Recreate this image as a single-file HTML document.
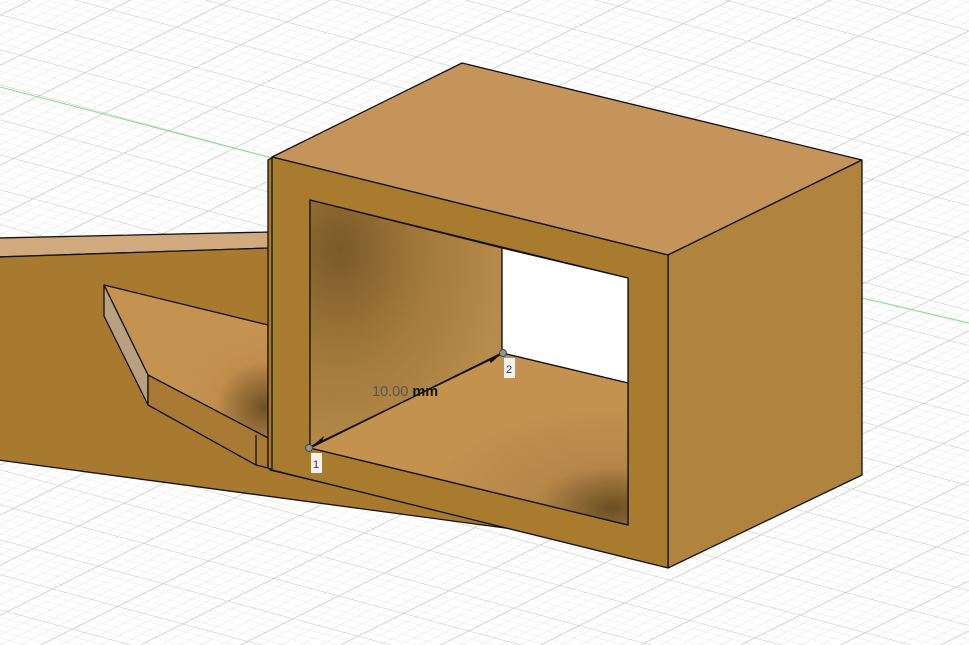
<!DOCTYPE html>
<html><head><style>
html,body{margin:0;padding:0;width:969px;height:645px;overflow:hidden;background:#fff}
svg{display:block}
text{font-family:"Liberation Sans",sans-serif}
</style></head><body>
<svg width="969" height="645" viewBox="0 0 969 645">
<defs>
<pattern id="g" width="50" height="50" patternUnits="userSpaceOnUse" patternTransform="matrix(1.3 0.35 0.91 -0.455 0 15)">
<path d="M10 0V50M20 0V50M30 0V50M40 0V50M0 10H50M0 20H50M0 30H50M0 40H50" stroke="#ebebeb" stroke-width="0.8" fill="none"/>
<path d="M0 0H50M0 0V50" stroke="#b8b8b8" stroke-width="1.3" fill="none"/>
</pattern>
<radialGradient id="bw" cx="0.15" cy="0.2" r="0.9">
<stop offset="0" stop-color="#7a5a28"/><stop offset="0.5" stop-color="#a37a3c"/><stop offset="1" stop-color="#b88c4c"/>
</radialGradient>
<radialGradient id="fl" cx="0.95" cy="0.9" r="0.6">
<stop offset="0" stop-color="#6a4e22"/><stop offset="0.4" stop-color="#b48648"/><stop offset="1" stop-color="#c4924f"/>
</radialGradient>
<radialGradient id="wt" cx="0.98" cy="0.8" r="0.5">
<stop offset="0" stop-color="#6f5023"/><stop offset="0.6" stop-color="#c08d4d"/><stop offset="1" stop-color="#c49352"/>
</radialGradient>
</defs>
<rect width="969" height="645" fill="url(#g)"/>
<line x1="0" y1="87" x2="272" y2="158" stroke="#7de07d" stroke-width="1"/>
<line x1="862" y1="298" x2="969" y2="323" stroke="#7de07d" stroke-width="1"/>
<g stroke="#111" stroke-width="1.3" stroke-linejoin="round">
<polygon points="-2,238 270,232 270,248 -2,257" fill="#d0a97c"/>
<polygon points="-2,257 270,248 270,470 520,530 -2,460" fill="#a87a2f"/>
<polygon points="104,285 268,325 268,438 148,375" fill="url(#wt)"/>
<polygon points="104,285 148,375 148,405 104,316" fill="#b9a07f"/>
<polygon points="148,375 268,438 268,468 256,465 148,405" fill="#a87a33"/>
<line x1="256" y1="435" x2="256" y2="465"/>
<polygon points="268,160 273,157 273,470 268,468" fill="#a77b33"/>
<polygon points="272,157 462,63 862,160 668,255" fill="#c4945a"/>
<polygon points="668,255 862,160 862,475 668,568" fill="#b0843f"/>
<path d="M272,157 L668,255 L668,568 L272,470 Z M310,200 L310,448 L628,525 L628,278 Z" fill="#a97b2e" fill-rule="evenodd"/>
<polygon points="310,200 502,248 502,353 310,448" fill="url(#bw)"/>
<polygon points="502,248 628,278 628,383 502,353" fill="#fff"/>
<polygon points="310,448 502,353 628,383 628,525" fill="url(#fl)"/>
</g>
<line x1="312" y1="446" x2="500" y2="355" stroke="#111" stroke-width="1.3"/>
<polygon points="312,446 324,436 322,442" fill="#111"/>
<polygon points="500,355 488,359 491,363" fill="#111"/>
<text x="372" y="396" font-size="14.5" fill="#555">10.00 <tspan fill="#111" font-weight="bold">mm</tspan></text>
<circle cx="309" cy="448" r="3.5" fill="#8a9a9a" stroke="#444"/>
<circle cx="503" cy="353" r="3.5" fill="#8a9a9a" stroke="#444"/>
<rect x="311" y="453" width="11" height="20" fill="#f2f2f2"/>
<text x="313" y="468" font-size="11" fill="#552255">1</text>
<rect x="504" y="358" width="11" height="20" fill="#f2f2f2"/>
<text x="506" y="373" font-size="11" fill="#333">2</text>
</svg>
</body></html>
